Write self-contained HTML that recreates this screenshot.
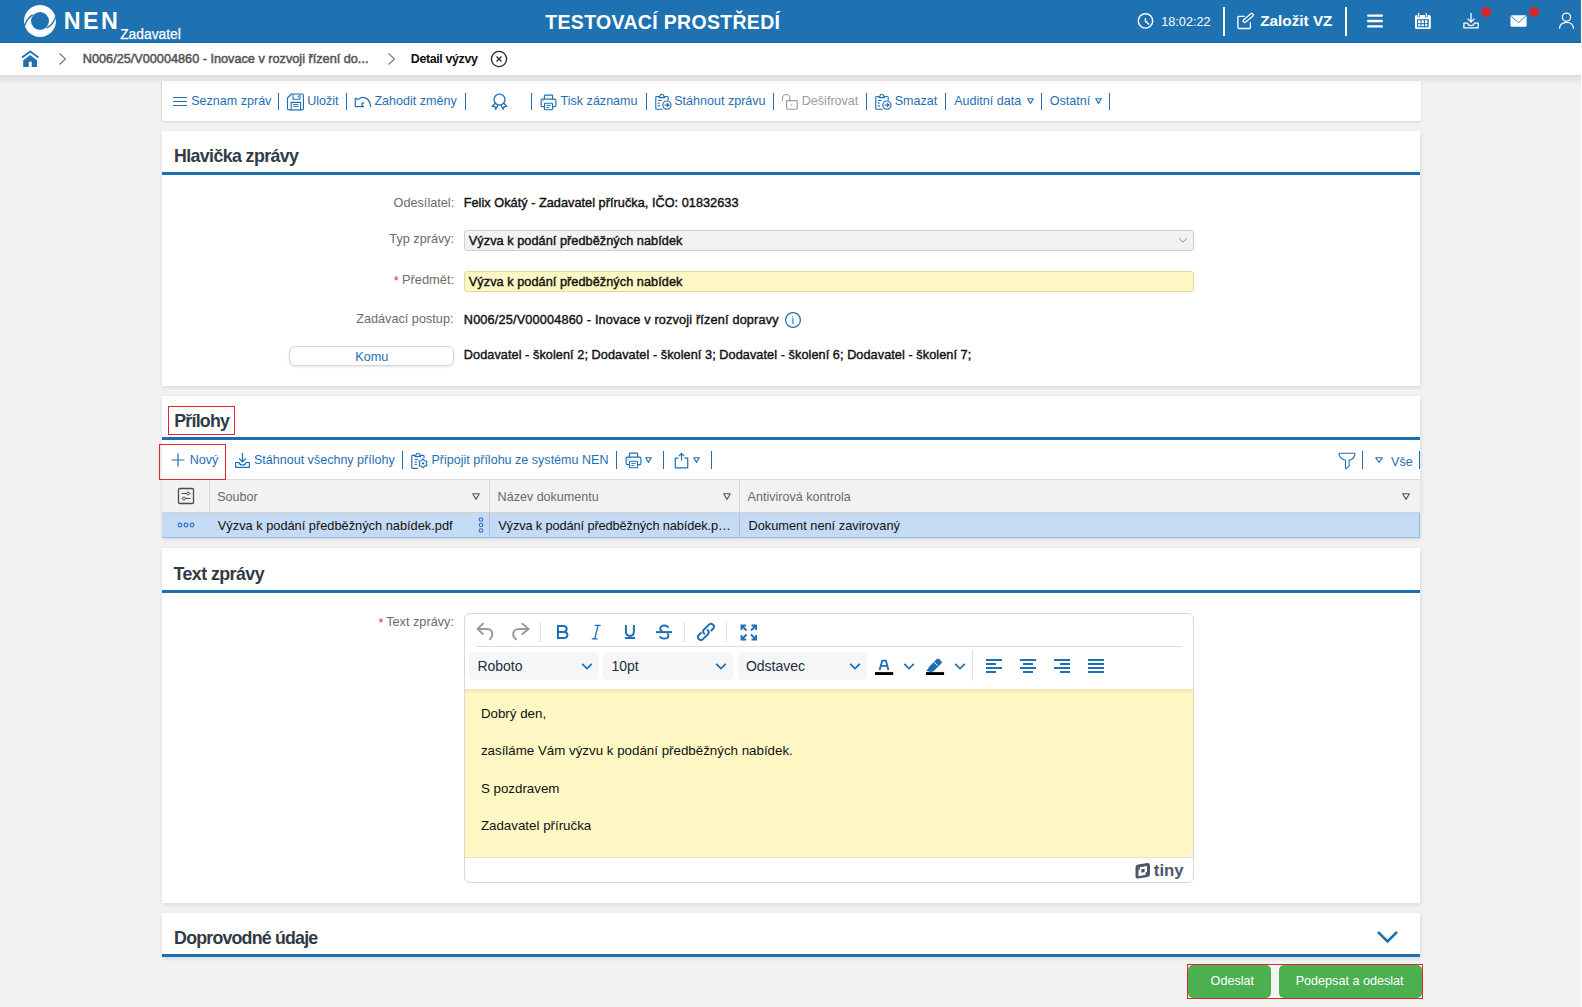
<!DOCTYPE html>
<html><head><meta charset="utf-8"><title>NEN</title>
<style>
html,body{margin:0;padding:0}
body{width:1582px;height:1007px;overflow:hidden;position:relative;background:#fff;font-family:"Liberation Sans", sans-serif}
.a{position:absolute}
.t{position:absolute;white-space:nowrap;font-family:"Liberation Sans", sans-serif}
</style></head><body>
<div class="a" style="left:0px;top:0px;width:1581px;height:1007px;background:#f2f2f2"></div><div class="a" style="left:0px;top:0px;width:1581px;height:43px;background:#1e72b2;border-bottom:0"></div><div class="a" style="left:0px;top:42px;width:1581px;height:1px;background:#0f68ab"></div><svg class="a" style="left:23px;top:4px;" width="34" height="34" viewBox="0 0 34 34">
<circle cx="17" cy="17" r="16" fill="#fff"/>
<circle cx="17" cy="17" r="9" fill="#1e72b2"/>
<path d="M9.8 10.6 Q3.5 14.5 1.2 23" stroke="#1e72b2" stroke-width="1.3" fill="none"/>
<path d="M23.6 24 Q30.5 20.5 32.8 12.5" stroke="#1e72b2" stroke-width="1.3" fill="none"/>
<path d="M0.5 21.5 L1.6 23 L3.8 26.5 L0 26.5 Z" fill="#1e72b2"/><path d="M32.6 12 L31.5 6 L34.5 6 L34.5 13 Z" fill="#1e72b2"/>
</svg><div class="t" style="top:6.6px;font-size:23.3px;line-height:29px;font-weight:bold;color:#fff;letter-spacing:2.4px;left:63.8px;">NEN</div><div class="t" style="top:25.8px;font-size:13.8px;line-height:17px;font-weight:normal;color:#fff;left:120.2px;-webkit-text-stroke:0.25px #fff;">Zadavatel</div><div class="t" style="top:9.5px;font-size:19.5px;line-height:24px;font-weight:bold;color:#fff;letter-spacing:0.32px;left:162.8px;width:1000px;text-align:center;">TESTOVACÍ PROSTŘEDÍ</div><svg class="a" style="left:1137px;top:13px;" width="17" height="17" viewBox="0 0 17 17"><circle cx="8.5" cy="7.9" r="7.2" stroke="#fff" stroke-width="1.4" fill="none"/><path d="M8.4 5 V8.1 L12 11.5" stroke="#fff" stroke-width="1.4" fill="none"/></svg><div class="t" style="top:13.6px;font-size:12.7px;line-height:16px;font-weight:normal;color:#fff;left:1161.2px;">18:02:22</div><div class="a" style="left:1223px;top:7px;width:2px;height:29px;background:#fff"></div><svg class="a" style="left:1236px;top:12px;" width="19" height="18" viewBox="0 0 19 18"><path d="M8.7 4.4 H3.1 Q1.9 4.4 1.9 5.6 V15.3 Q1.9 16.5 3.1 16.5 H13.2 Q14.4 16.5 14.4 15.3 V10.1" stroke="#fff" stroke-width="1.3" fill="none"/><path d="M8.7 8.9 L15.7 3.0" stroke="#fff" stroke-width="4.3" stroke-linecap="round"/><path d="M8.7 8.9 L15.7 3.0" stroke="#1e72b2" stroke-width="1.8" stroke-linecap="round"/></svg><div class="t" style="top:11.2px;font-size:15.3px;line-height:19px;font-weight:bold;color:#fff;left:1260.2px;">Založit VZ</div><div class="a" style="left:1345px;top:7px;width:2px;height:29px;background:#fff"></div><svg class="a" style="left:1366px;top:13px;" width="18" height="16" viewBox="0 0 18 16"><path d="M2.2 2.6 H15.8 M2.2 8 H15.8 M2.2 13.4 H15.8" stroke="#fff" stroke-width="2.4" stroke-linecap="round"/></svg><svg class="a" style="left:1414px;top:12px;" width="18" height="18" viewBox="0 0 18 18"><rect x="1" y="2.9" width="15.8" height="14.2" rx="1.6" fill="#fff"/><rect x="3" y="7.2" width="11.8" height="8.1" fill="#1e72b2"/><g fill="#fff"><rect x="4.1" y="8.3" width="2.4" height="2.9"/><rect x="7.5" y="8.3" width="2.4" height="2.9"/><rect x="11" y="8.3" width="2.4" height="2.9"/><rect x="4.1" y="12.2" width="2.4" height="2"/><rect x="7.5" y="12.2" width="2.4" height="2"/><rect x="11" y="12.2" width="2.4" height="2"/></g><path d="M4.6 1.2 V5.2 M12.4 1.2 V5.2" stroke="#1e72b2" stroke-width="2.6"/><path d="M4.6 1 V4.8 M12.4 1 V4.8" stroke="#fff" stroke-width="1.2"/></svg><svg class="a" style="left:1462px;top:12px;" width="18" height="18" viewBox="0 0 18 18"><path d="M9 1 V10 M5.6 6.6 L9 10 L12.4 6.6" stroke="#fff" stroke-width="1.3" fill="none"/><path d="M1.9 11.2 V15.9 H16.1 V11.2 H12.4 C12 13 10.6 13.7 9 13.7 C7.4 13.7 6 13 5.6 11.2 Z" stroke="#fff" stroke-width="1.3" fill="none" stroke-linejoin="round"/></svg><svg class="a" style="left:1481px;top:7px;" width="10" height="10" viewBox="0 0 10 10"><circle cx="5" cy="5" r="5" fill="#d0282e"/></svg><svg class="a" style="left:1510px;top:15px;" width="17" height="12" viewBox="0 0 17 12"><rect x="0.5" y="0.3" width="16.1" height="11.4" rx="1.5" fill="#fff"/><path d="M1.2 1 L8.5 7.6 L15.8 1" stroke="#1e72b2" stroke-width="0.9" fill="none"/></svg><svg class="a" style="left:1529px;top:7px;" width="10" height="10" viewBox="0 0 10 10"><circle cx="5" cy="5" r="5" fill="#d0282e"/></svg><svg class="a" style="left:1558px;top:12px;" width="17" height="18" viewBox="0 0 17 18"><circle cx="8.5" cy="5.2" r="4.1" stroke="#fff" stroke-width="1.3" fill="none"/><path d="M1.5 16.8 C1.5 12.6 4.6 10.3 8.5 10.3 C12.4 10.3 15.5 12.6 15.5 16.8" stroke="#fff" stroke-width="1.3" fill="none"/></svg><div class="a" style="left:0px;top:43px;width:1581px;height:32px;background:#fff"></div><div class="a" style="left:0px;top:75px;width:1581px;height:9px;background:linear-gradient(#dadada,#f2f2f2)"></div><svg class="a" style="left:21px;top:50px;" width="18" height="18" viewBox="0 0 18 18"><path d="M1.6 7 L9.2 1.5 L16.8 7" stroke="#1e72b2" stroke-width="1.9" fill="none" stroke-linecap="round" stroke-linejoin="round"/><path d="M2.2 17 V10.3 L9.2 5 L16 10.3 V17 H10.7 V11.7 H7.8 V17 Z" fill="#1e72b2"/></svg><svg class="a" style="left:58px;top:52px;" width="9" height="14" viewBox="0 0 9 14"><path d="M1.5 1.5 L7.5 7 L1.5 12.5" stroke="#777" stroke-width="1.1" fill="none"/></svg><div class="t" style="top:51.3px;font-size:12.7px;line-height:16px;font-weight:normal;color:#555;left:82.8px;-webkit-text-stroke:0.5px #555;">N006/25/V00004860 - Inovace v rozvoji řízení do...</div><svg class="a" style="left:387px;top:52px;" width="9" height="14" viewBox="0 0 9 14"><path d="M1.5 1.5 L7.5 7 L1.5 12.5" stroke="#777" stroke-width="1.1" fill="none"/></svg><div class="t" style="top:51.0px;font-size:12.4px;line-height:16px;font-weight:bold;color:#111;letter-spacing:-0.35px;left:410.8px;">Detail výzvy</div><svg class="a" style="left:490px;top:50px;" width="18" height="18" viewBox="0 0 18 18"><circle cx="9" cy="9" r="7.6" stroke="#222" stroke-width="1.3" fill="none"/><path d="M6.5 6.5 L11.5 11.5 M11.5 6.5 L6.5 11.5" stroke="#222" stroke-width="1.2"/></svg><div class="a" style="left:162px;top:81px;width:1259px;height:40px;background:linear-gradient(#f8f8f8,#fff 6px);box-shadow:0 1px 2px rgba(0,0,0,0.12), -1px 0 1px rgba(0,0,0,0.05)"></div><svg class="a" style="left:172px;top:96px;" width="16" height="11" viewBox="0 0 16 11"><path d="M1 1.5 H15 M1 5.5 H15 M1 9.5 H15" stroke="#1f6fb4" stroke-width="1.2"/></svg><div class="t" style="top:93.0px;font-size:12.55px;line-height:16px;font-weight:normal;color:#1f6fb4;left:191.2px;">Seznam zpráv</div><div class="a" style="left:278.0px;top:93px;width:1.3000000000000114px;height:17px;background:#1f6fb4"></div><svg class="a" style="left:286px;top:93px;" width="19" height="18" viewBox="0 0 19 18"><path d="M5.3 1 H16 Q17.4 1 17.4 2.4 V15.4 Q17.4 16.8 16 16.8 H2.9 Q1.5 16.8 1.5 15.4 V5 Z" stroke="#1f6fb4" stroke-width="1.15" fill="none" stroke-linejoin="round"/><path d="M7 1.2 V6.2 H14 V1.2" stroke="#1f6fb4" stroke-width="1.1" fill="none"/><path d="M12.2 2.6 V4.4" stroke="#1f6fb4" stroke-width="1.1"/><path d="M5.2 16.8 V9.4 H14.6 V16.8" stroke="#1f6fb4" stroke-width="1.1" fill="none"/><path d="M7 11.6 H12.6 M7 13.6 H12.6" stroke="#1f6fb4" stroke-width="0.95"/></svg><div class="t" style="top:93.0px;font-size:12.55px;line-height:16px;font-weight:normal;color:#1f6fb4;left:307.2px;">Uložit</div><div class="a" style="left:345.9px;top:93px;width:1.3000000000000114px;height:17px;background:#1f6fb4"></div><svg class="a" style="left:354px;top:95px;" width="18" height="14" viewBox="0 0 18 14"><path d="M1.3 2.9 V11.6 H9.6 C8.6 10.8 7.9 10 7.7 9.1 C8.4 8.2 9.3 7.8 10.2 7.9" stroke="#1f6fb4" stroke-width="1.2" fill="none" stroke-linejoin="round"/><path d="M1.3 2.9 L3.8 4.6 L5.6 3.6 C8.5 1.6 15.8 1.6 16.6 11.9" stroke="#1f6fb4" stroke-width="1.2" fill="none" stroke-linejoin="round"/></svg><div class="t" style="top:93.0px;font-size:12.55px;line-height:16px;font-weight:normal;color:#1f6fb4;left:374.4px;">Zahodit změny</div><div class="a" style="left:465.0px;top:93px;width:1.3000000000000114px;height:17px;background:#1f6fb4"></div><svg class="a" style="left:491px;top:93px;" width="17" height="17" viewBox="0 0 17 17"><circle cx="8.5" cy="6.6" r="5.5" stroke="#1f6fb4" stroke-width="1.3" fill="none"/><path d="M4.2 10.2 L1.2 13.4 L3.9 13.6 L4.8 16.3 L7 12.1 M12.8 10.2 L15.8 13.4 L13.1 13.6 L12.2 16.3 L10 12.1" stroke="#1f6fb4" stroke-width="1.3" fill="none" stroke-linejoin="round"/></svg><div class="a" style="left:530.9px;top:93px;width:1.2999999999999545px;height:17px;background:#1f6fb4"></div><svg class="a" style="left:539.8px;top:93.5px;" width="17" height="17" viewBox="0 0 17 17"><path d="M4.4 5 V1.9 Q4.4 1.1 5.2 1.1 H11.8 Q12.6 1.1 12.6 1.9 V5" stroke="#1f6fb4" stroke-width="1.15" fill="none"/><path d="M4.2 12.6 H2.3 Q1.1 12.6 1.1 11.4 V6.3 Q1.1 5.1 2.3 5.1 H14.7 Q15.9 5.1 15.9 6.3 V11.4 Q15.9 12.6 14.7 12.6 H12.8" stroke="#1f6fb4" stroke-width="1.15" fill="none"/><rect x="4.5" y="9.2" width="8" height="6.5" rx="0.7" stroke="#1f6fb4" stroke-width="1.15" fill="none"/><path d="M6.3 11.4 H10.7 M6.3 13.5 H9.3 M2.6 7.1 H3.6" stroke="#1f6fb4" stroke-width="0.95"/></svg><div class="t" style="top:93.0px;font-size:12.55px;line-height:16px;font-weight:normal;color:#1f6fb4;left:560.6px;">Tisk záznamu</div><div class="a" style="left:645.9px;top:93px;width:1.2999999999999545px;height:17px;background:#1f6fb4"></div><svg class="a" style="left:654.5px;top:93.2px;" width="17" height="17" viewBox="0 0 17 17"><path d="M7.6 16.2 H1.6 Q0.8 16.2 0.8 15.4 V4.4 Q0.8 3.5 1.7 3.5 H4 M9.6 3.5 H12.2 Q13.2 3.5 13.2 4.5 V7.2" stroke="#1f6fb4" stroke-width="1.15" fill="none"/><path d="M4 4.6 V3.2 H5 A1.8 1.9 0 0 1 8.6 3.2 H9.6 V4.6 Z" stroke="#1f6fb4" stroke-width="1.1" fill="none" stroke-linejoin="round"/><path d="M2.9 7.5 H6.6 M2.9 10.2 H4.6 M2.9 12.8 H5" stroke="#1f6fb4" stroke-width="1.2"/><circle cx="11.9" cy="12.1" r="4.1" stroke="#1f6fb4" stroke-width="1.15" fill="#fff"/><path d="M9.6 12.1 H13.8 M12 10.3 L13.9 12.1 L12 13.9" stroke="#1f6fb4" stroke-width="1.25" fill="none"/></svg><div class="t" style="top:93.0px;font-size:12.55px;line-height:16px;font-weight:normal;color:#1f6fb4;left:674.2px;">Stáhnout zprávu</div><div class="a" style="left:772.9px;top:93px;width:1.2999999999999545px;height:17px;background:#1f6fb4"></div><svg class="a" style="left:781px;top:93px;" width="18" height="17" viewBox="0 0 18 17"><path d="M1.5 8 V5.2 A3.75 3.75 0 0 1 9 5.2 V7.4" stroke="#9c9c9c" stroke-width="1.15" fill="none"/><rect x="5.6" y="7.6" width="10.6" height="8.6" rx="0.6" stroke="#9c9c9c" stroke-width="1.15" fill="none"/><path d="M10.6 11.2 V12.6" stroke="#8aa6c0" stroke-width="1"/></svg><div class="t" style="top:93.0px;font-size:12.55px;line-height:16px;font-weight:normal;color:#9b9b9b;left:801.8px;">Dešifrovat</div><div class="a" style="left:866.0px;top:93px;width:1.2999999999999545px;height:17px;background:#1f6fb4"></div><svg class="a" style="left:874.8px;top:93.2px;" width="17" height="17" viewBox="0 0 17 17"><path d="M7.6 16.2 H1.6 Q0.8 16.2 0.8 15.4 V4.4 Q0.8 3.5 1.7 3.5 H4 M9.6 3.5 H12.2 Q13.2 3.5 13.2 4.5 V7.2" stroke="#1f6fb4" stroke-width="1.15" fill="none"/><path d="M4 4.6 V3.2 H5 A1.8 1.9 0 0 1 8.6 3.2 H9.6 V4.6 Z" stroke="#1f6fb4" stroke-width="1.1" fill="none" stroke-linejoin="round"/><path d="M2.9 7.5 H6.6 M2.9 10.2 H4.6 M2.9 12.8 H5" stroke="#1f6fb4" stroke-width="1.2"/><circle cx="11.9" cy="12.1" r="4.1" stroke="#1f6fb4" stroke-width="1.15" fill="#fff"/><path d="M9.6 12.1 H13.8 M12 10.3 L13.9 12.1 L12 13.9" stroke="#1f6fb4" stroke-width="1.25" fill="none"/></svg><div class="t" style="top:93.0px;font-size:12.55px;line-height:16px;font-weight:normal;color:#1f6fb4;left:894.7px;">Smazat</div><div class="a" style="left:944.9px;top:93px;width:1.2999999999999545px;height:17px;background:#1f6fb4"></div><div class="t" style="top:93.0px;font-size:12.55px;line-height:16px;font-weight:normal;color:#1f6fb4;left:954.2px;">Auditní data</div><svg class="a" style="left:1027px;top:98.2px;" width="7" height="6" viewBox="0 0 7 6"><path d="M0.7 0.8 H6.3 L3.5 5.4 Z" stroke="#1f6fb4" stroke-width="1.1" fill="none" stroke-linejoin="round"/></svg><div class="a" style="left:1040.9px;top:93px;width:1.2999999999999545px;height:17px;background:#1f6fb4"></div><div class="t" style="top:93.0px;font-size:12.55px;line-height:16px;font-weight:normal;color:#1f6fb4;left:1049.8px;">Ostatní</div><svg class="a" style="left:1095.3px;top:98.2px;" width="7" height="6" viewBox="0 0 7 6"><path d="M0.7 0.8 H6.3 L3.5 5.4 Z" stroke="#1f6fb4" stroke-width="1.1" fill="none" stroke-linejoin="round"/></svg><div class="a" style="left:1109.0px;top:93px;width:1.2999999999999545px;height:17px;background:#1f6fb4"></div><div class="a" style="left:162px;top:131px;width:1258px;height:255px;background:#fff;box-shadow:1px 2px 4px rgba(0,0,0,0.09), -1px 0 3px rgba(0,0,0,0.035)"></div><div class="a" style="left:162px;top:172px;width:1258px;height:3px;background:#1a6fb0"></div><div class="t" style="top:145.0px;font-size:17.8px;line-height:22px;font-weight:bold;color:#313b46;letter-spacing:-0.6px;left:173.9px;">Hlavička zprávy</div><div class="t" style="top:194.6px;font-size:12.7px;line-height:16px;font-weight:normal;color:#6b6b6b;left:-545.8px;width:1000px;text-align:right;">Odesílatel:</div><div class="t" style="top:195.1px;font-size:12.7px;line-height:16px;font-weight:normal;color:#111;letter-spacing:0.04px;left:463.7px;-webkit-text-stroke:0.4px #111;">Felix Okátý - Zadavatel příručka, IČO: 01832633</div><div class="t" style="top:230.6px;font-size:12.7px;line-height:16px;font-weight:normal;color:#6b6b6b;left:-545.8px;width:1000px;text-align:right;">Typ zprávy:</div><div class="a" style="left:464px;top:230px;width:730px;height:21px;background:#f2f2f2;border:1px solid #cfcfcf;border-radius:3px;box-sizing:border-box"></div><div class="t" style="top:232.8px;font-size:12.7px;line-height:16px;font-weight:normal;color:#111;letter-spacing:0.06px;left:468.8px;-webkit-text-stroke:0.4px #111;">Výzva k podání předběžných nabídek</div><svg class="a" style="left:1178px;top:237px;" width="11" height="7" viewBox="0 0 11 7"><path d="M1 1.3 L5 5.1 L9 1.3" stroke="#8c8c8c" stroke-width="1" fill="none"/></svg><div class="t" style="top:271.9px;font-size:12.9px;line-height:16px;font-weight:normal;color:#6b6b6b;left:-545.8px;width:1000px;text-align:right;">Předmět:</div><div class="t" style="top:272.7px;font-size:12.7px;line-height:16px;font-weight:normal;color:#d23030;left:393.8px;">*</div><div class="a" style="left:464px;top:271px;width:730px;height:21px;background:#fdf8c3;border:1px solid #e2d9a2;border-radius:3px;box-sizing:border-box"></div><div class="t" style="top:273.9px;font-size:12.7px;line-height:16px;font-weight:normal;color:#111;letter-spacing:0.06px;left:468.8px;-webkit-text-stroke:0.4px #111;">Výzva k podání předběžných nabídek</div><div class="t" style="top:311.3px;font-size:12.7px;line-height:16px;font-weight:normal;color:#6b6b6b;left:-546.5px;width:1000px;text-align:right;">Zadávací postup:</div><div class="t" style="top:312.0px;font-size:12.7px;line-height:16px;font-weight:normal;color:#111;letter-spacing:0.17px;left:463.8px;-webkit-text-stroke:0.4px #111;">N006/25/V00004860 - Inovace v rozvoji řízení dopravy</div><svg class="a" style="left:784px;top:311px;" width="18" height="18" viewBox="0 0 18 18"><circle cx="9" cy="9" r="7.4" stroke="#1f6fb4" stroke-width="1.2" fill="none"/><path d="M8.2 5.6 L9.2 5.6 M8.3 7.8 L8.9 7.8 V12.2 Q8.9 12.8 9.8 12.6" stroke="#1f6fb4" stroke-width="1.1" fill="none"/></svg><div class="a" style="left:289px;top:346px;width:164.5px;height:19.5px;background:#fff;border:1px solid #d6d6d6;border-radius:6px;box-sizing:border-box;box-shadow:0 1px 3px rgba(0,0,0,0.10)"></div><div class="t" style="top:348.9px;font-size:12.7px;line-height:16px;font-weight:normal;color:#1f6fb4;left:-128.2px;width:1000px;text-align:center;">Komu</div><div class="t" style="top:346.8px;font-size:12.7px;line-height:16px;font-weight:normal;color:#111;letter-spacing:0.067px;left:463.8px;-webkit-text-stroke:0.4px #111;">Dodavatel - školení 2; Dodavatel - školení 3; Dodavatel - školení 6; Dodavatel - školení 7;</div><div class="a" style="left:162px;top:396px;width:1258px;height:142px;background:#fff;box-shadow:1px 2px 4px rgba(0,0,0,0.09), -1px 0 3px rgba(0,0,0,0.035)"></div><div class="a" style="left:162px;top:437px;width:1258px;height:3px;background:#1a6fb0"></div><div class="t" style="top:410.3px;font-size:17.8px;line-height:22px;font-weight:bold;color:#313b46;letter-spacing:-0.75px;left:174.2px;">Přílohy</div><svg class="a" style="left:171px;top:453px;" width="14" height="14" viewBox="0 0 14 14"><path d="M7 0.5 V13.5 M0.5 7 H13.5" stroke="#1f6fb4" stroke-width="1.2"/></svg><div class="t" style="top:452.0px;font-size:12.55px;line-height:16px;font-weight:normal;color:#1f6fb4;left:189.7px;">Nový</div><svg class="a" style="left:234px;top:452px;" width="17" height="17" viewBox="0 0 17 17"><path d="M8.5 1 V9.6 M5.2 6.5 L8.5 9.8 L11.8 6.5" stroke="#1f6fb4" stroke-width="1.2" fill="none"/><path d="M1.6 10.5 V15.4 H15.4 V10.5 H12 C11.6 12.3 10.2 13 8.5 13 C6.8 13 5.4 12.3 5 10.5 Z" stroke="#1f6fb4" stroke-width="1.2" fill="none" stroke-linejoin="round"/></svg><div class="t" style="top:452.0px;font-size:12.55px;line-height:16px;font-weight:normal;color:#1f6fb4;left:253.9px;">Stáhnout všechny přílohy</div><div class="a" style="left:402.1px;top:451px;width:1.3000000000000114px;height:18px;background:#1f6fb4"></div><svg class="a" style="left:411px;top:451.5px;" width="17" height="17" viewBox="0 0 17 17"><path d="M6.8 16.3 H1.6 Q0.8 16.3 0.8 15.5 V4.3 Q0.8 3.4 1.7 3.4 H4 M9.6 3.4 H12.2 Q13.1 3.4 13.1 4.4 V6" stroke="#1f6fb4" stroke-width="1.15" fill="none"/><path d="M4 4.6 V3.2 H5 A1.8 1.9 0 0 1 8.6 3.2 H9.6 V4.6 Z" stroke="#1f6fb4" stroke-width="1.1" fill="none" stroke-linejoin="round"/><path d="M3.6 7.5 H6.9 M3.6 10 H5.9 M3.6 12.3 H5.9" stroke="#1f6fb4" stroke-width="1.2"/><path d="M12.00 6.80 L13.55 8.72 L15.98 9.10 L15.10 11.40 L15.98 13.70 L13.55 14.08 L12.00 16.00 L10.45 14.08 L8.02 13.70 L8.90 11.40 L8.02 9.10 L10.45 8.72 Z" stroke="#1f6fb4" stroke-width="1.15" fill="#fff" stroke-linejoin="round"/><circle cx="12.0" cy="11.4" r="1.1" fill="#1f6fb4"/></svg><div class="t" style="top:452.0px;font-size:12.55px;line-height:16px;font-weight:normal;color:#1f6fb4;left:431.4px;">Připojit přílohu ze systému NEN</div><div class="a" style="left:615.9px;top:451px;width:1.2999999999999545px;height:18px;background:#1f6fb4"></div><svg class="a" style="left:624.5px;top:451.5px;" width="17" height="17" viewBox="0 0 17 17"><path d="M4.4 5 V1.9 Q4.4 1.1 5.2 1.1 H11.8 Q12.6 1.1 12.6 1.9 V5" stroke="#1f6fb4" stroke-width="1.15" fill="none"/><path d="M4.2 12.6 H2.3 Q1.1 12.6 1.1 11.4 V6.3 Q1.1 5.1 2.3 5.1 H14.7 Q15.9 5.1 15.9 6.3 V11.4 Q15.9 12.6 14.7 12.6 H12.8" stroke="#1f6fb4" stroke-width="1.15" fill="none"/><rect x="4.5" y="9.2" width="8" height="6.5" rx="0.7" stroke="#1f6fb4" stroke-width="1.15" fill="none"/><path d="M6.3 11.4 H10.7 M6.3 13.5 H9.3 M2.6 7.1 H3.6" stroke="#1f6fb4" stroke-width="0.95"/></svg><svg class="a" style="left:645.2px;top:457.2px;" width="7" height="6" viewBox="0 0 7 6"><path d="M0.7 0.8 H6.3 L3.5 5.4 Z" stroke="#1f6fb4" stroke-width="1.1" fill="none" stroke-linejoin="round"/></svg><div class="a" style="left:663.0px;top:451px;width:1.2999999999999545px;height:18px;background:#1f6fb4"></div><svg class="a" style="left:674px;top:451.5px;" width="15" height="17" viewBox="0 0 15 17"><path d="M4.5 6.2 H1.3 V15.8 H13.7 V6.2 H10.5" stroke="#1f6fb4" stroke-width="1.2" fill="none" stroke-linejoin="round"/><path d="M7.5 8.4 V1.5 M4.9 4.1 L7.5 1.3 L10.1 4.1" stroke="#1f6fb4" stroke-width="1.2" fill="none"/></svg><svg class="a" style="left:693px;top:457.2px;" width="7" height="6" viewBox="0 0 7 6"><path d="M0.7 0.8 H6.3 L3.5 5.4 Z" stroke="#1f6fb4" stroke-width="1.1" fill="none" stroke-linejoin="round"/></svg><div class="a" style="left:710.9px;top:451px;width:1.2999999999999545px;height:18px;background:#1f6fb4"></div><svg class="a" style="left:1338px;top:451.5px;" width="18" height="17" viewBox="0 0 18 17"><path d="M1.6 1.2 H16.2 C16.8 1.2 17 1.7 16.9 2.3 C16.4 5.4 14.1 7.5 11.1 8.2 V14.2 L8.7 16.2 Q7.5 17 7.5 15.9 V8.2 C4.5 7.5 1.7 5.4 1.0 2.3 C0.9 1.7 1.1 1.2 1.6 1.2 Z" stroke="#1f6fb4" stroke-width="1.1" fill="none" stroke-linejoin="round"/></svg><div class="a" style="left:1361.9px;top:451px;width:1.2999999999999545px;height:18px;background:#1f6fb4"></div><svg class="a" style="left:1375px;top:457px;" width="8" height="6" viewBox="0 0 8 6"><path d="M0.7 0.8 H7.3 L4.0 5.4 Z" stroke="#1f6fb4" stroke-width="1.1" fill="none" stroke-linejoin="round"/></svg><div class="t" style="top:453.5px;font-size:12.55px;line-height:16px;font-weight:normal;color:#1f6fb4;left:1391.1px;">Vše</div><div class="a" style="left:1419.1px;top:451px;width:1.2999999999999545px;height:18px;background:#1f6fb4"></div><div class="a" style="left:162px;top:479px;width:1258px;height:1px;background:#dcdcdc"></div><div class="a" style="left:162px;top:480px;width:1258px;height:33px;background:#f2f2f2"></div><div class="a" style="left:162px;top:512px;width:1258px;height:1px;background:#d2d2d2"></div><div class="a" style="left:209px;top:480px;width:1px;height:32px;background:#d6d6d6"></div><div class="a" style="left:489px;top:480px;width:1px;height:32px;background:#d6d6d6"></div><div class="a" style="left:739px;top:480px;width:1px;height:32px;background:#d6d6d6"></div><svg class="a" style="left:177px;top:487px;" width="18" height="18" viewBox="0 0 18 18"><rect x="1.5" y="1.5" width="15" height="15" rx="1.2" stroke="#4a4a4a" stroke-width="1.3" fill="none"/><path d="M4.5 6.5 H13.5 M4.5 11.5 H13.5" stroke="#4a4a4a" stroke-width="1"/><circle cx="11" cy="6.5" r="1.4" fill="#fff" stroke="#4a4a4a" stroke-width="1"/><circle cx="7" cy="11.5" r="1.4" fill="#fff" stroke="#4a4a4a" stroke-width="1"/></svg><div class="t" style="top:488.8px;font-size:12.55px;line-height:16px;font-weight:normal;color:#6a6a6a;left:217.2px;">Soubor</div><div class="t" style="top:488.8px;font-size:12.55px;line-height:16px;font-weight:normal;color:#6a6a6a;left:497.6px;">Název dokumentu</div><div class="t" style="top:488.8px;font-size:12.55px;line-height:16px;font-weight:normal;color:#6a6a6a;left:747.6px;">Antivirová kontrola</div><svg class="a" style="left:472.2px;top:492.8px;" width="8" height="7" viewBox="0 0 8 7"><path d="M0.7 0.8 H7.3 L4.0 6.4 Z" stroke="#555" stroke-width="1.1" fill="none" stroke-linejoin="round"/></svg><svg class="a" style="left:722.5px;top:492.8px;" width="8" height="7" viewBox="0 0 8 7"><path d="M0.7 0.8 H7.3 L4.0 6.4 Z" stroke="#555" stroke-width="1.1" fill="none" stroke-linejoin="round"/></svg><svg class="a" style="left:1402.3px;top:492.8px;" width="8" height="7" viewBox="0 0 8 7"><path d="M0.7 0.8 H7.3 L4.0 6.4 Z" stroke="#555" stroke-width="1.1" fill="none" stroke-linejoin="round"/></svg><div class="a" style="left:162px;top:513px;width:1258px;height:25px;background:#c5daf3"></div><div class="a" style="left:162px;top:537px;width:1258px;height:1px;background:#8cbbe9"></div><div class="a" style="left:489px;top:513px;width:1px;height:24px;background:#aac4dd"></div><div class="a" style="left:739px;top:513px;width:1px;height:24px;background:#aac4dd"></div><div class="a" style="left:1419px;top:513px;width:1px;height:25px;background:#8cbbe9"></div><svg class="a" style="left:177px;top:522px;" width="18" height="7" viewBox="0 0 18 7"><circle cx="3" cy="3" r="1.9" stroke="#2d6fd0" stroke-width="1.1" fill="none"/><circle cx="9" cy="3" r="1.9" stroke="#2d6fd0" stroke-width="1.1" fill="none"/><circle cx="15" cy="3" r="1.9" stroke="#2d6fd0" stroke-width="1.1" fill="none"/></svg><svg class="a" style="left:478px;top:517px;" width="6" height="16" viewBox="0 0 6 16"><circle cx="3" cy="2.5" r="1.8" stroke="#2d6fd0" stroke-width="1.1" fill="none"/><circle cx="3" cy="8" r="1.8" stroke="#2d6fd0" stroke-width="1.1" fill="none"/><circle cx="3" cy="13.5" r="1.8" stroke="#2d6fd0" stroke-width="1.1" fill="none"/></svg><div class="t" style="top:517.5px;font-size:12.8px;line-height:16px;font-weight:normal;color:#111;left:217.8px;">Výzva k podání předběžných nabídek.pdf</div><div class="t" style="top:517.5px;font-size:12.8px;line-height:16px;font-weight:normal;color:#111;letter-spacing:-0.12px;left:498.2px;">Výzva k podání předběžných nabídek.p…</div><div class="t" style="top:517.5px;font-size:12.8px;line-height:16px;font-weight:normal;color:#111;left:748.4px;">Dokument není zavirovaný</div><div class="a" style="left:162px;top:548px;width:1258px;height:355px;background:#fff;box-shadow:1px 2px 4px rgba(0,0,0,0.09), -1px 0 3px rgba(0,0,0,0.035)"></div><div class="a" style="left:162px;top:590px;width:1258px;height:3px;background:#1a6fb0"></div><div class="t" style="top:563.2px;font-size:17.8px;line-height:22px;font-weight:bold;color:#313b46;letter-spacing:-0.55px;left:173.5px;">Text zprávy</div><div class="t" style="top:613.9px;font-size:12.7px;line-height:16px;font-weight:normal;color:#6b6b6b;left:-546.1px;width:1000px;text-align:right;">Text zprávy:</div><div class="t" style="top:615.2px;font-size:12.7px;line-height:16px;font-weight:normal;color:#d23030;left:378.6px;">*</div><div class="a" style="left:464px;top:613px;width:730px;height:270px;background:#fff;border:1px solid #d8d8d8;border-radius:6px;box-sizing:border-box"></div><svg class="a" style="left:476px;top:622px;" width="19" height="19" viewBox="0 0 19 19"><path d="M6.8 1.8 L1.6 6.9 L6.8 12" stroke="#9a9a9a" stroke-width="2" fill="none" stroke-linecap="round" stroke-linejoin="round"/><path d="M1.8 6.9 H11.3 C14.5 6.9 16.3 9.3 16.3 12.2 C16.3 14.2 15.3 16 13.9 17.1" stroke="#9a9a9a" stroke-width="2" fill="none" stroke-linecap="round"/></svg><svg class="a" style="left:512px;top:622px;" width="19" height="19" viewBox="0 0 19 19"><path d="M10.4 1.8 L16.6 6.9 L10.4 12" stroke="#9a9a9a" stroke-width="2" fill="none" stroke-linecap="round" stroke-linejoin="round"/><path d="M16.4 6.9 H6.7 C3.5 6.9 1.2 9.3 1.2 12.2 C1.2 14.2 2.3 16 4 17.1" stroke="#9a9a9a" stroke-width="2" fill="none" stroke-linecap="round"/></svg><div class="a" style="left:540px;top:622px;width:1px;height:20px;background:#e0e0e0"></div><svg class="a" style="left:555px;top:624px;" width="15" height="16" viewBox="0 0 15 16"><path d="M2.9 1.9 H8.2 C10.6 1.9 11.7 3.1 11.7 4.9 C11.7 6.8 10.4 7.9 8.3 7.9 H2.9 M2.9 7.9 H8.6 C11.1 7.9 12.4 9.2 12.4 11.1 C12.4 13.1 11 14.1 8.6 14.1 H2.9 V0.95" stroke="#1f6fb4" stroke-width="2" fill="none" stroke-linejoin="miter"/></svg><svg class="a" style="left:590px;top:624px;" width="13" height="16" viewBox="0 0 13 16"><path d="M4.6 1.3 H10.6 M1.8 14.8 H7.6 M8.1 1.3 L4.7 14.8" stroke="#1f6fb4" stroke-width="1.35" fill="none"/></svg><svg class="a" style="left:624px;top:624px;" width="13" height="16" viewBox="0 0 13 16"><path d="M1.9 1 V7.6 C1.9 10.4 3.6 11.9 5.9 11.9 C8.2 11.9 9.9 10.4 9.9 7.6 V1" stroke="#1f6fb4" stroke-width="2" fill="none"/><path d="M0.9 14 H11" stroke="#1f6fb4" stroke-width="2"/></svg><svg class="a" style="left:655px;top:624px;" width="18" height="16" viewBox="0 0 18 16"><path d="M13.4 3.7 C12.7 2.3 11.3 1.5 9.2 1.5 C6.7 1.5 5.2 2.8 5.2 4.6 C5.2 5.9 5.9 6.8 7.2 7.4" stroke="#1f6fb4" stroke-width="1.9" fill="none"/><path d="M12.4 9.4 C13.1 10 13.4 10.8 13.4 11.7 C13.4 13.5 11.7 14.6 9.2 14.6 C7 14.6 5.4 13.8 4.7 12.4" stroke="#1f6fb4" stroke-width="1.9" fill="none"/><path d="M1 8.1 H17" stroke="#1f6fb4" stroke-width="2"/></svg><div class="a" style="left:684px;top:622px;width:1px;height:20px;background:#e0e0e0"></div><svg class="a" style="left:696px;top:622px;" width="20" height="20" viewBox="0 0 20 20"><path d="M14.75 9.05 L17.05 6.75 A2.9 2.9 0 0 0 12.95 2.65 L7.45 8.15 A2.9 2.9 0 0 0 8.9 12.1" stroke="#1f6fb4" stroke-width="2" fill="none" stroke-linecap="butt"/><path d="M5.45 10.45 L2.85 13.05 A2.9 2.9 0 0 0 6.95 17.15 L12.45 11.65 A2.9 2.9 0 0 0 11.0 7.7" stroke="#1f6fb4" stroke-width="2" fill="none" stroke-linecap="butt"/></svg><div class="a" style="left:726px;top:622px;width:1px;height:20px;background:#e0e0e0"></div><svg class="a" style="left:739.6px;top:623.6px;" width="18" height="17" viewBox="0 0 18 17"><path d="M1.5 6 V1.5 H6 M1.5 1.5 L6.5 6.5 M11.5 1.5 H16 V6 M16 1.5 L11 6.5 M1.5 11 V15.5 H6 M1.5 15.5 L6.5 10.5 M16 11 V15.5 H11.5 M16 15.5 L11 10.5" stroke="#1f6fb4" stroke-width="1.9" fill="none"/></svg><div class="a" style="left:476px;top:646px;width:706px;height:1px;background:#dedede"></div><div class="a" style="left:469px;top:652px;width:130px;height:28px;background:#f6f6f6;border-radius:5px"></div><div class="t" style="top:657.0px;font-size:14px;line-height:18px;font-weight:normal;color:#222f3e;left:477.4px;">Roboto</div><svg class="a" style="left:581px;top:661.6px;" width="12" height="9" viewBox="0 0 12 9"><path d="M1.2 1.8 L6 6.6 L10.8 1.8" stroke="#1f6fb4" stroke-width="1.7" fill="none"/></svg><div class="a" style="left:603px;top:652px;width:130px;height:28px;background:#f6f6f6;border-radius:5px"></div><div class="t" style="top:657.0px;font-size:14px;line-height:18px;font-weight:normal;color:#222f3e;left:611.4px;">10pt</div><svg class="a" style="left:715px;top:661.6px;" width="12" height="9" viewBox="0 0 12 9"><path d="M1.2 1.8 L6 6.6 L10.8 1.8" stroke="#1f6fb4" stroke-width="1.7" fill="none"/></svg><div class="a" style="left:737.5px;top:652px;width:129.5px;height:28px;background:#f6f6f6;border-radius:5px"></div><div class="t" style="top:657.0px;font-size:14px;line-height:18px;font-weight:normal;color:#222f3e;left:745.9px;">Odstavec</div><svg class="a" style="left:849px;top:661.6px;" width="12" height="9" viewBox="0 0 12 9"><path d="M1.2 1.8 L6 6.6 L10.8 1.8" stroke="#1f6fb4" stroke-width="1.7" fill="none"/></svg><svg class="a" style="left:874px;top:658px;" width="20" height="18" viewBox="0 0 20 18"><path d="M5.6 12 L8.3 2.6 H11.9 L14.4 12 M6.9 7.9 H13.1" stroke="#1f6fb4" stroke-width="1.9" fill="none" stroke-linejoin="miter"/><rect x="1" y="14.1" width="18.2" height="2.9" fill="#000"/></svg><svg class="a" style="left:903px;top:661.6px;" width="12" height="9" viewBox="0 0 12 9"><path d="M1.2 1.8 L6 6.6 L10.8 1.8" stroke="#1f6fb4" stroke-width="1.7" fill="none"/></svg><svg class="a" style="left:925px;top:657px;" width="20" height="19" viewBox="0 0 20 19"><path d="M1.4 13.8 L3.6 11.1 L3.9 9.9 L11.8 2 Q13 0.9 14.2 2 L16.4 4.2 Q17.5 5.4 16.4 6.6 L8.6 14.3 L7.3 14.5 L6.4 15.2 Z" fill="#1f6fb4"/><path d="M9 5.1 L12.9 8.9" stroke="#fff" stroke-width="0.9"/><rect x="1" y="15.1" width="18.1" height="2.9" fill="#000"/></svg><svg class="a" style="left:954px;top:661.6px;" width="12" height="9" viewBox="0 0 12 9"><path d="M1.2 1.8 L6 6.6 L10.8 1.8" stroke="#1f6fb4" stroke-width="1.7" fill="none"/></svg><div class="a" style="left:972px;top:650px;width:1px;height:31px;background:#e0e0e0"></div><svg class="a" style="left:986px;top:659px;" width="16" height="15" viewBox="0 0 16 15"><path d="M0 1 H16 M0 5 H10 M0 9 H16 M0 13 H10" stroke="#1f6fb4" stroke-width="1.95"/></svg><svg class="a" style="left:1020px;top:659px;" width="16" height="15" viewBox="0 0 16 15"><path d="M0 1 H16 M3 5 H13 M0 9 H16 M3 13 H13" stroke="#1f6fb4" stroke-width="1.95"/></svg><svg class="a" style="left:1054px;top:659px;" width="16" height="15" viewBox="0 0 16 15"><path d="M0 1 H16 M6 5 H16 M0 9 H16 M6 13 H16" stroke="#1f6fb4" stroke-width="1.95"/></svg><svg class="a" style="left:1088px;top:659px;" width="16" height="15" viewBox="0 0 16 15"><path d="M0 1 H16 M0 5 H16 M0 9 H16 M0 13 H16" stroke="#1f6fb4" stroke-width="1.95"/></svg><div class="a" style="left:465px;top:689px;width:728px;height:168px;background:#fff8c4;box-shadow:inset 0 4px 4px -2px rgba(0,0,0,0.09)"></div><div class="a" style="left:465px;top:857px;width:728px;height:1px;background:#e2e2e2"></div><div class="t" style="top:705.2px;font-size:13.33px;line-height:17px;font-weight:normal;color:#111;left:480.9px;">Dobrý den,</div><div class="t" style="top:742.4px;font-size:13.33px;line-height:17px;font-weight:normal;color:#111;left:480.9px;">zasíláme Vám výzvu k podání předběžných nabídek.</div><div class="t" style="top:780.0px;font-size:13.33px;line-height:17px;font-weight:normal;color:#111;left:480.9px;">S pozdravem</div><div class="t" style="top:817.4px;font-size:13.33px;line-height:17px;font-weight:normal;color:#111;left:480.9px;">Zadavatel příručka</div><svg class="a" style="left:1134px;top:862px;" width="18" height="18" viewBox="0 0 18 18"><path d="M4.3 2.5 L13.2 1.1 Q16 0.7 16 3.5 V12.2 Q16 14.5 13.6 14.9 L4.3 16.5 Q1.5 17 1.5 14 V5.6 Q1.5 2.9 4.3 2.5 Z" fill="#4b5666"/><path d="M4.5 5.6 L13 4 V12.6 L4.5 14.2 Z" fill="#fff"/><path d="M4.3 5.5 L6 5.2 V7.6 L4.3 7.9 Z M11.6 10.35 L13.2 10.05 V12.7 L11.6 13 Z" fill="#4b5666"/><path d="M7.3 7.3 L10.6 6.7 V10.1 L7.3 10.7 Z" fill="#4b5666"/></svg><div class="t" style="top:860.2px;font-size:16.8px;line-height:21px;font-weight:bold;color:#4b5666;left:1153.8px;">tiny</div><div class="a" style="left:162px;top:913px;width:1258px;height:44px;background:#fff;box-shadow:1px 2px 4px rgba(0,0,0,0.09), -1px 0 3px rgba(0,0,0,0.035)"></div><div class="a" style="left:162px;top:954px;width:1258px;height:3px;background:#1a6fb0"></div><div class="t" style="top:926.8px;font-size:17.8px;line-height:22px;font-weight:bold;color:#313b46;letter-spacing:-0.8px;left:174.1px;">Doprovodné údaje</div><svg class="a" style="left:1376px;top:930px;" width="23" height="14" viewBox="0 0 23 14"><path d="M2 2 L11.5 11.5 L21 2" stroke="#1e72b2" stroke-width="2.6" fill="none"/></svg><div class="a" style="left:1187px;top:964px;width:236px;height:35px;border:1px solid #e0242c;box-sizing:border-box"></div><div class="a" style="left:1188.4px;top:965px;width:82.19999999999982px;height:33px;background:#4caf50;border-radius:5px"></div><div class="t" style="top:972.9px;font-size:12.6px;line-height:16px;font-weight:normal;color:#fff;left:1210.6px;">Odeslat</div><div class="a" style="left:1279.3px;top:965px;width:142.70000000000005px;height:33px;background:#4caf50;border-radius:5px"></div><div class="t" style="top:972.9px;font-size:12.6px;line-height:16px;font-weight:normal;color:#fff;left:1295.7px;">Podepsat a odeslat</div><div class="a" style="left:168px;top:406px;width:66.5px;height:29px;border:1px solid #e0242c;box-sizing:border-box"></div><div class="a" style="left:159px;top:444px;width:67px;height:36px;border:1px solid #e0242c;box-sizing:border-box"></div>
</body></html>
